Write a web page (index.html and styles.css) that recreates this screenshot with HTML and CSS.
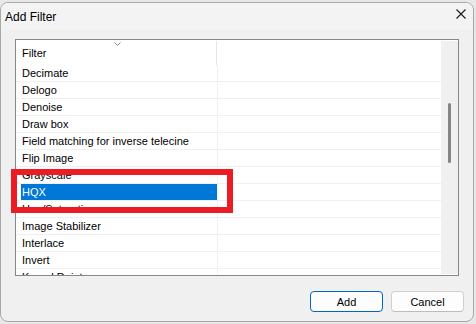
FILE: index.html
```html
<!DOCTYPE html>
<html>
<head>
<meta charset="utf-8">
<link rel="stylesheet" href="styles.css">
</head>
<body>
<div class="win">
  <div class="titlebar">
    <span class="title">Add Filter</span>
    <svg class="close" width="10" height="10" viewBox="0 0 10 10"><path d="M0.5 0.5 L9.5 9.5 M9.5 0.5 L0.5 9.5" stroke="#1a1a1a" stroke-width="1.1" fill="none"/></svg>
  </div>
  <div class="client">
    <div class="listbox">
      <div class="list">
        <div class="header">
          <div class="hcell c1">Filter
            <svg class="sort" width="7" height="4" viewBox="0 0 7 4"><path d="M0.5 0.5 L3.5 3.5 L6.5 0.5" stroke="#8a8a8a" stroke-width="1" fill="none"/></svg>
          </div>
          <div class="hcell c2"></div>
        </div>
        <div class="row"><div class="cell c1"><span class="txt">Decimate</span></div><div class="cell c2"></div></div>
        <div class="row"><div class="cell c1"><span class="txt">Delogo</span></div><div class="cell c2"></div></div>
        <div class="row"><div class="cell c1"><span class="txt">Denoise</span></div><div class="cell c2"></div></div>
        <div class="row"><div class="cell c1"><span class="txt">Draw box</span></div><div class="cell c2"></div></div>
        <div class="row"><div class="cell c1"><span class="txt">Field matching for inverse telecine</span></div><div class="cell c2"></div></div>
        <div class="row"><div class="cell c1"><span class="txt">Flip Image</span></div><div class="cell c2"></div></div>
        <div class="row"><div class="cell c1"><span class="txt">Grayscale</span></div><div class="cell c2"></div></div>
        <div class="row sel"><div class="cell c1"><span class="txt">HQX</span></div><div class="cell c2"></div></div>
        <div class="row"><div class="cell c1"><span class="txt">Hue/Saturation</span></div><div class="cell c2"></div></div>
        <div class="row"><div class="cell c1"><span class="txt">Image Stabilizer</span></div><div class="cell c2"></div></div>
        <div class="row"><div class="cell c1"><span class="txt">Interlace</span></div><div class="cell c2"></div></div>
        <div class="row"><div class="cell c1"><span class="txt">Invert</span></div><div class="cell c2"></div></div>
        <div class="row"><div class="cell c1"><span class="txt">Kernel Deint</span></div><div class="cell c2"></div></div>
      </div>
      <div class="scrollbar"><div class="thumb"></div></div>
    </div>
    <div class="buttons">
      <button class="btn default">Add</button>
      <button class="btn">Cancel</button>
    </div>
  </div>
</div>
<div class="annot"></div>
</body>
</html>
```
FILE: styles.css
```css
html, body {
  margin: 0;
  padding: 0;
}
body {
  position: relative;
  background: #e8e8e8;
  padding-top: 2px;
  font-family: "Liberation Sans", Arial, sans-serif;
  font-size: 11px;
  color: #000;
  width: 476px;
  height: 322px;
  overflow: hidden;
}
.win {
  box-sizing: border-box;
  width: 474px;
  height: 320px;
  border: 1px solid #a8a8a8;
  border-radius: 8px;
  background: #f0f0f0;
  overflow: hidden;
}
.titlebar {
  display: flex;
  align-items: flex-start;
  height: 26px;
  padding: 0 7px 0 4px;
  background: #f3f3f3;
}
.title {
  padding-top: 7px;
  line-height: 14px;
  font-size: 12px;
}
.close {
  margin-left: auto;
  margin-top: 6px;
}
.client {
  padding: 10px 9px 0 14px;
}
.listbox {
  box-sizing: border-box;
  width: 444px;
  height: 237px;
  border: 1px solid #828790;
  background: #fff;
  display: flex;
}
.list {
  width: 425px;
  overflow: hidden;
}
.header {
  display: flex;
  height: 25px;
}
.hcell {
  position: relative;
  box-sizing: border-box;
  line-height: 25px;
  padding-left: 6px;
}
.hcell.c1 {
  width: 201px;
  border-right: 1px solid #e5e5e5;
  margin-top: 1px;
  line-height: 24px;
}
.sort {
  position: absolute;
  left: 98px;
  top: 1px;
}
.row {
  display: flex;
  height: 17px;
  box-sizing: border-box;
  border-bottom: 1px solid #f0f0f0;
}
.cell {
  box-sizing: border-box;
  height: 16px;
}
.cell.c1 {
  width: 202px;
  border-right: 1px solid #f0f0f0;
  padding-left: 5px;
}
.cell.c2 {
  flex: 1;
}
.txt {
  display: block;
  height: 16px;
  line-height: 17px;
  padding-left: 1px;
  white-space: nowrap;
}
.row.sel .txt {
  background: #0078d7;
  color: #fff;
}
.scrollbar {
  width: 17px;
  margin: 1px 0;
  background: #f0f0f0;
}
.thumb {
  width: 3px;
  height: 60px;
  margin: 62px 0 0 7px;
  border-radius: 2px;
  background: #858585;
}
.buttons {
  display: flex;
  justify-content: flex-end;
  gap: 8px;
  margin-top: 15px;
}
.btn {
  box-sizing: border-box;
  width: 73px;
  height: 21px;
  padding: 0;
  font-family: "Liberation Sans", Arial, sans-serif;
  font-size: 11px;
  color: #000;
  background: #fdfdfd;
  border: 1px solid #d0d0d0;
  border-bottom-color: #bcbcbc;
  border-radius: 4px;
}
.btn.default {
  border: 1px solid #0067c0;
}
.annot {
  position: absolute;
  left: 11px;
  top: 169px;
  width: 222px;
  height: 44px;
  box-sizing: border-box;
  border: 6px solid #ec1c24;
}
```
